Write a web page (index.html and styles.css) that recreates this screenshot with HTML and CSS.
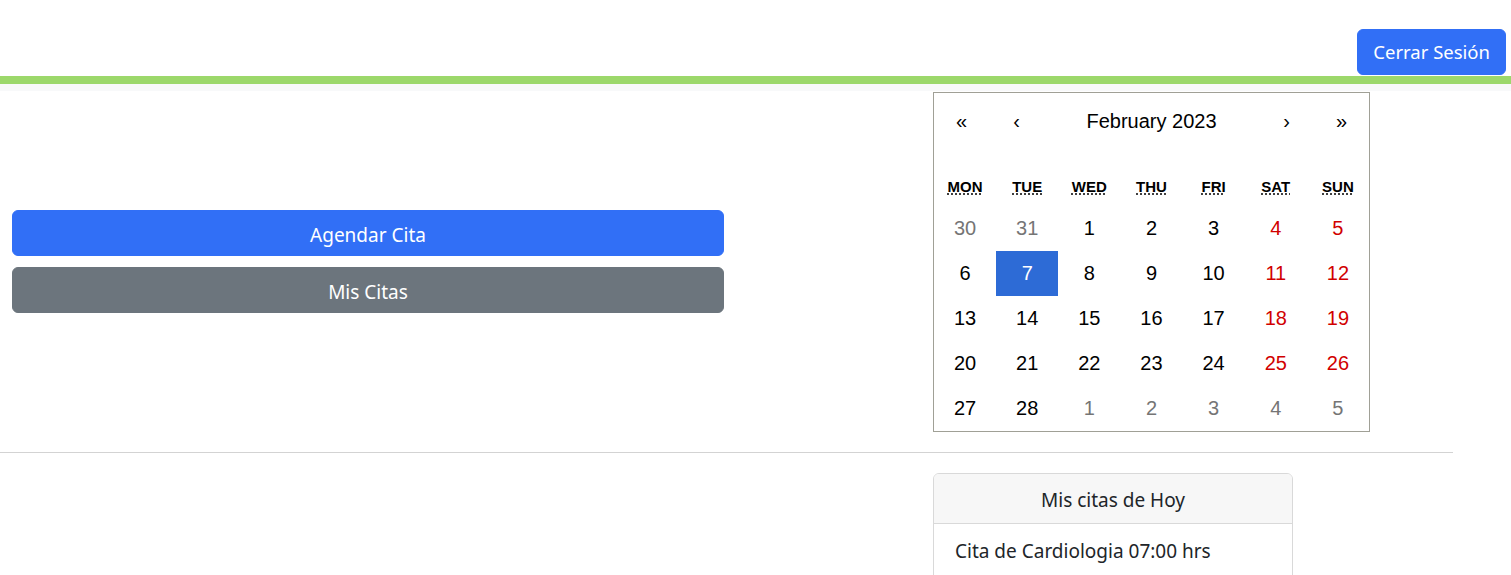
FILE: index.html
```html
<!DOCTYPE html>
<html lang="es">
<head>
<meta charset="utf-8">
<title>Citas</title>
<link rel="stylesheet" href="styles.css">
</head>
<body>
<header class="topbar">
  <button class="btn btn-primary btn-logout">Cerrar Sesión</button>
</header>
<div class="band"></div>
<main class="page">
  <section class="row">
    <div class="col-left">
      <button class="btn btn-primary btn-block">Agendar Cita</button>
      <button class="btn btn-secondary btn-block">Mis Citas</button>
    </div>
    <div class="col-right">
      <div class="calendar">
        <div class="cal-nav">
          <button class="nav-btn">«</button>
          <button class="nav-btn">‹</button>
          <button class="nav-label">February 2023</button>
          <button class="nav-btn">›</button>
          <button class="nav-btn">»</button>
        </div>
        <div class="weekdays">
          <div class="wd"><abbr title="Monday">MON</abbr></div>
          <div class="wd"><abbr title="Tuesday">TUE</abbr></div>
          <div class="wd"><abbr title="Wednesday">WED</abbr></div>
          <div class="wd"><abbr title="Thursday">THU</abbr></div>
          <div class="wd"><abbr title="Friday">FRI</abbr></div>
          <div class="wd"><abbr title="Saturday">SAT</abbr></div>
          <div class="wd"><abbr title="Sunday">SUN</abbr></div>
        </div>
        <div class="days">
          <button class="tile neighbor">30</button>
          <button class="tile neighbor">31</button>
          <button class="tile">1</button>
          <button class="tile">2</button>
          <button class="tile">3</button>
          <button class="tile weekend">4</button>
          <button class="tile weekend">5</button>
          <button class="tile">6</button>
          <button class="tile active">7</button>
          <button class="tile">8</button>
          <button class="tile">9</button>
          <button class="tile">10</button>
          <button class="tile weekend">11</button>
          <button class="tile weekend">12</button>
          <button class="tile">13</button>
          <button class="tile">14</button>
          <button class="tile">15</button>
          <button class="tile">16</button>
          <button class="tile">17</button>
          <button class="tile weekend">18</button>
          <button class="tile weekend">19</button>
          <button class="tile">20</button>
          <button class="tile">21</button>
          <button class="tile">22</button>
          <button class="tile">23</button>
          <button class="tile">24</button>
          <button class="tile weekend">25</button>
          <button class="tile weekend">26</button>
          <button class="tile">27</button>
          <button class="tile">28</button>
          <button class="tile neighbor">1</button>
          <button class="tile neighbor">2</button>
          <button class="tile neighbor">3</button>
          <button class="tile neighbor">4</button>
          <button class="tile neighbor">5</button>
        </div>
      </div>
    </div>
  </section>
  <hr class="divider">
  <section class="row row-bottom">
    <div class="col-left"></div>
    <div class="col-right">
      <div class="card">
        <div class="card-header">Mis citas de Hoy</div>
        <ul class="list">
          <li class="list-item">Cita de Cardiologia 07:00 hrs</li>
        </ul>
      </div>
    </div>
  </section>
</main>
</body>
</html>
```

FILE: styles.css
```css
* { box-sizing: border-box; }

html, body {
  margin: 0;
  padding: 0;
  background: #fff;
  font-family: "Noto Sans", "Open Sans", "Liberation Sans", sans-serif;
  font-size: 19px;
  color: #212529;
  overflow: hidden;
}

.btn {
  font-family: inherit;
  font-size: 19px;
  line-height: 30px;
  border: 1px solid transparent;
  border-radius: 6px;
  padding: 9px 15px 5px;
  color: #fff;
  cursor: pointer;
}
.btn-primary { background: #316ff6; border-color: #316ff6; }
.btn-secondary { background: #6c757d; border-color: #6c757d; }

.topbar {
  height: 76px;
  display: flex;
  justify-content: flex-end;
  align-items: flex-end;
  padding: 0 5px 1px 0;
}
.btn-logout {
  height: 46px;
  font-size: 18.5px;
  padding: 7px 15px 7px;
  line-height: 30px;
}

.band {
  height: 15px;
  border-top: 8px solid #9cd86b;
  background: #f8f9fa;
}

.page { width: 1453px; }

.row {
  display: grid;
  grid-template-columns: 736px 185px 1fr;
  align-items: center;
}
.row > .col-left { grid-column: 1; }
.row > .col-right { grid-column: 3; padding-left: 12px; }

.col-left {
  padding: 0 12px;
  display: flex;
  flex-direction: column;
  gap: 11px;
}
.btn-block {
  width: 100%;
  height: 46px;
  display: block;
}

.calendar {
  margin-top: 1px;
  width: 437px;
  border: 1px solid #a0a096;
  background: #fff;
  font-family: "Liberation Sans", Arial, sans-serif;
  font-size: 20px;
  color: #000;
}
.calendar button {
  font-family: inherit;
  font-size: 20px;
  border: 0;
  background: none;
  color: #000;
  padding: 0;
  margin: 0;
}
.cal-nav {
  display: flex;
  height: 56px;
  margin-bottom: 20px;
}
.nav-btn { width: 55px; }
.nav-label { flex: 1; }

.weekdays {
  display: grid;
  grid-template-columns: repeat(7, 1fr);
  text-align: center;
  font-weight: bold;
  font-size: 15px;
  text-transform: uppercase;
  height: 37px;
  padding: 9px 0 11px;
  line-height: 17px;
}
.wd abbr {
  text-decoration: underline dotted;
  text-underline-offset: 2px;
}

.days {
  display: grid;
  grid-template-columns: repeat(7, 1fr);
}
.calendar .tile {
  height: 45px;
  text-align: center;
}
.calendar .tile.weekend { color: #d10000; }
.calendar .tile.neighbor { color: #757575; }
.calendar .tile.active { background: #2d6bd6; color: #fff; }

.divider {
  margin: 20px 0;
  border: 0;
  border-top: 1px solid #d3d3d3;
  height: 0;
}

.row-bottom { align-items: start; }

.card {
  width: 360px;
  border: 1px solid #d9d9d9;
  border-radius: 6px;
  overflow: hidden;
}
.card-header {
  background: #f7f7f7;
  border-bottom: 1px solid #d9d9d9;
  padding: 12px 20px 8px;
  line-height: 29px;
  text-align: center;
}
.list { list-style: none; margin: 0; padding: 0 0 40px; }
.list-item {
  padding: 12px 21px 8px;
  line-height: 30px;
}
```
